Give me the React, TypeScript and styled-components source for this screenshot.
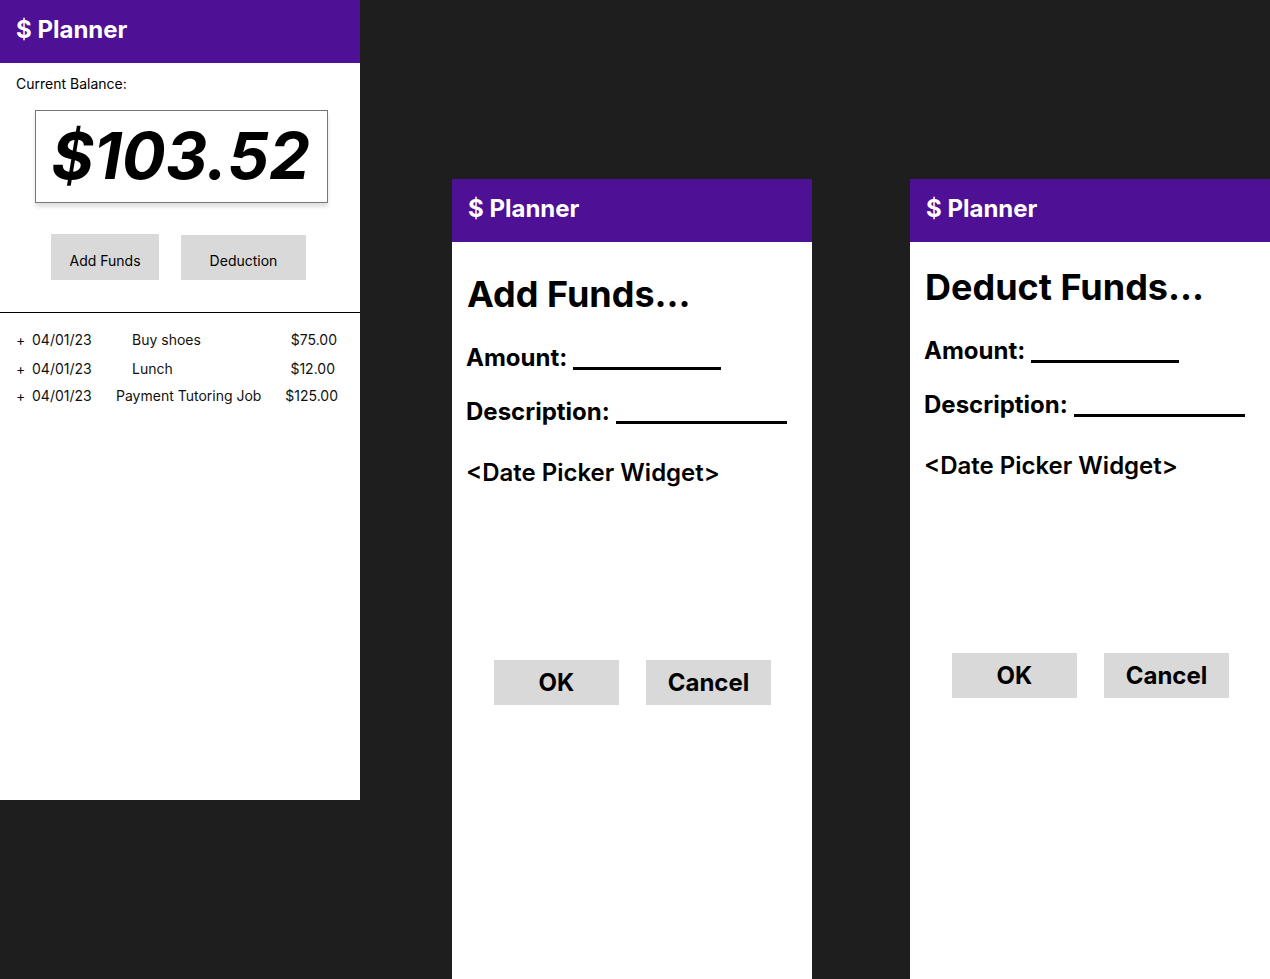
import React from 'react';
import styled, { createGlobalStyle } from 'styled-components';

const GlobalStyle = createGlobalStyle`
  html, body {
    margin: 0;
    padding: 0;
    background: #1e1e1e;
  }
  body {
    font-family: Inter, "Noto Sans", sans-serif;
    color: #000;
  }
`;

const Canvas = styled.div`
  position: relative;
  width: 1270px;
  height: 979px;
  overflow: hidden;
  background: #1e1e1e;
`;

// frames sit on a free design canvas, so their place is the content
const Frame = styled.section<{ $x: number; $y: number }>`
  position: absolute;
  left: ${p => p.$x}px;
  top: ${p => p.$y}px;
  width: 360px;
  height: 800px;
  background: #fff;
  display: flex;
  flex-direction: column;
`;

const Header = styled.header`
  height: 63px;
  flex-shrink: 0;
  background: #4e1196;
  color: #fff;
  display: flex;
  align-items: center;
  padding-left: 16px;
  padding-bottom: 4px;
  box-sizing: border-box;
  font-size: 24px;
  font-weight: 700;
`;

/* ---------- home frame ---------- */

const BalanceLabel = styled.div`
  margin: 12px 0 0 16px;
  font-size: 14px;
  line-height: 17px;
`;

const BalanceBox = styled.div`
  margin: 18px 0 0 35px;
  width: 293px;
  height: 93px;
  box-sizing: border-box;
  border: 1px solid #767676;
  box-shadow: 0 4px 4px rgba(0, 0, 0, 0.12);
  display: flex;
  align-items: center;
  justify-content: center;
  font-size: 65px;
  font-weight: 700;
  font-style: italic;
  padding: 0 2px 2px 0;
`;

const ActionRow = styled.div`
  display: flex;
  align-items: flex-start;
  gap: 22px;
  margin: 31px 0 0 51px;
`;

const SmallButton = styled.button<{ $w: number; $h: number; $top?: number }>`
  width: ${p => p.$w}px;
  height: ${p => p.$h}px;
  margin-top: ${p => p.$top ?? 0}px;
  border: none;
  background: #d9d9d9;
  font-family: Inter, sans-serif;
  font-size: 14px;
  color: #000;
  padding: 6px 0 0;
  cursor: pointer;
`;

const Divider = styled.hr`
  margin: 32px 0 0;
  border: none;
  border-top: 1px solid #000;
  height: 0;
`;

const TxList = styled.div`
  display: flex;
  flex-direction: column;
  margin-top: 18px;
`;

const TxRow = styled.div<{ $gap: number }>`
  display: flex;
  font-size: 14px;
  line-height: 17px;
  margin-top: ${p => p.$gap}px;
  color: #111;
`;

const TxPlus = styled.span`
  width: 16px;
  padding-left: 16px;
`;

const TxDate = styled.span`
  width: 84px;
`;

const TxDesc = styled.span<{ $indent: number }>`
  flex: 1;
  padding-left: ${p => p.$indent}px;
`;

const TxAmount = styled.span<{ $right: number }>`
  padding-right: ${p => p.$right}px;
  text-align: right;
`;

/* ---------- dialog frames ---------- */

const Body = styled.div`
  display: flex;
  flex-direction: column;
  padding-left: 14px;
`;

const Title = styled.h1<{ $top: number }>`
  margin: ${p => p.$top}px 0 0 1px;
  font-size: 36px;
  line-height: 44px;
  font-weight: 700;
`;

const Field = styled.div<{ $gap: number }>`
  display: flex;
  align-items: center;
  margin-top: ${p => p.$gap}px;
  font-size: 24px;
  line-height: 30px;
  font-weight: 700;
`;

const Blank = styled.span<{ $w: number }>`
  align-self: flex-end;
  width: ${p => p.$w}px;
  height: 0;
  margin: 0 0 3px 6px;
  border-bottom: 3px solid #000;
`;

const Widget = styled.div`
  margin-top: 31px;
  font-size: 24px;
  line-height: 30px;
  font-weight: 600;
`;

const DialogActions = styled.div`
  display: flex;
  gap: 27px;
  margin: 172px 0 0 28px;
`;

const BigButton = styled.button`
  width: 125px;
  height: 45px;
  border: none;
  background: #d9d9d9;
  font-family: Inter, sans-serif;
  font-size: 24px;
  font-weight: 700;
  color: #000;
  padding: 0;
  cursor: pointer;
`;

const transactions = [
  { date: '04/01/23', desc: 'Buy shoes', amount: '$75.00', indent: 16, right: 23, gap: 0 },
  { date: '04/01/23', desc: 'Lunch', amount: '$12.00', indent: 16, right: 25, gap: 12 },
  { date: '04/01/23', desc: 'Payment Tutoring Job', amount: '$125.00', indent: 0, right: 22, gap: 10 },
];

const Dialog = ({ x, title, titleTop }: { x: number; title: string; titleTop: number }) => (
  <Frame $x={x} $y={179}>
    <Header>$ Planner</Header>
    <Body>
      <Title $top={titleTop}>{title}</Title>
      <Field $gap={27}>
        Amount:<Blank $w={148} />
      </Field>
      <Field $gap={24}>
        Description:<Blank $w={171} />
      </Field>
      <Widget>&lt;Date Picker Widget&gt;</Widget>
      <DialogActions>
        <BigButton>OK</BigButton>
        <BigButton>Cancel</BigButton>
      </DialogActions>
    </Body>
  </Frame>
);

export default function App() {
  return (
    <>
      <GlobalStyle />
      <Canvas>
        <Frame $x={0} $y={0}>
          <Header>$ Planner</Header>
          <BalanceLabel>Current Balance:</BalanceLabel>
          <BalanceBox>$103.52</BalanceBox>
          <ActionRow>
            <SmallButton $w={108} $h={46}>Add Funds</SmallButton>
            <SmallButton $w={125} $h={45} $top={1}>Deduction</SmallButton>
          </ActionRow>
          <Divider />
          <TxList>
            {transactions.map((t, i) => (
              <TxRow key={i} $gap={t.gap}>
                <TxPlus>+</TxPlus>
                <TxDate>{t.date}</TxDate>
                <TxDesc $indent={t.indent}>{t.desc}</TxDesc>
                <TxAmount $right={t.right}>{t.amount}</TxAmount>
              </TxRow>
            ))}
          </TxList>
        </Frame>
        <Dialog x={452} title="Add Funds..." titleTop={30} />
        <Dialog x={910} title="Deduct Funds..." titleTop={23} />
      </Canvas>
    </>
  );
}
